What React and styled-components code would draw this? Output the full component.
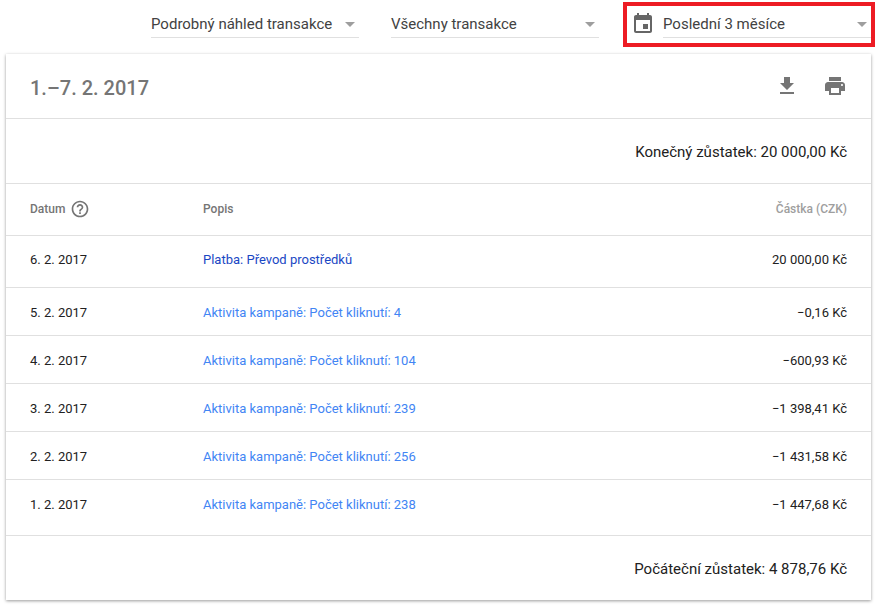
import React from 'react';
import styled, { createGlobalStyle } from 'styled-components';

const GlobalStyle = createGlobalStyle`
  html, body {
    margin: 0;
    padding: 0;
    background: #fff;
    font-family: Roboto, "Liberation Sans", sans-serif;
    overflow: hidden;
  }
`;

const Page = styled.div`
  width: 878px;
  height: 609px;
  padding: 2px 7px 0 6px;
  box-sizing: border-box;
`;

const Toolbar = styled.div`
  display: flex;
  justify-content: flex-end;
  align-items: flex-start;
  height: 52px;
  margin-right: -4px;
`;

const FilterGroup = styled.div`
  display: flex;
  align-items: flex-start;
  gap: 32px;
  margin-right: 24px;
  padding-top: 5px;
`;

const Select = styled.div`
  width: 208px;
  height: 31px;
  box-sizing: border-box;
  border-bottom: 1px solid #e0e0e0;
  display: flex;
  align-items: center;
  justify-content: space-between;
  padding: 4px 4px 0 0;
  font-size: 15px;
  color: #424242;
`;

const Caret = styled.span`
  width: 0;
  height: 0;
  border-left: 5px solid transparent;
  border-right: 5px solid transparent;
  border-top: 5px solid #9e9e9e;
`;

const Highlight = styled.div`
  width: 252px;
  height: 45px;
  box-sizing: border-box;
  border: 4px solid #ed1c24;
  display: flex;
  align-items: flex-start;
  padding: 1px 0 0 4px;
`;

const CalendarIcon = styled.svg`
  width: 24px;
  height: 24px;
  fill: #666666;
  margin: 5px 8px 0 0;
  flex-shrink: 0;
`;

const Card = styled.div`
  width: 865px;
  height: 546px;
  background: #fff;
  box-shadow: 0 1px 3px rgba(0, 0, 0, 0.4);
  display: flex;
  flex-direction: column;
`;

const CardHeader = styled.div`
  height: 65px;
  box-sizing: border-box;
  border-bottom: 1px solid #e0e0e0;
  padding: 0 24px;
  display: flex;
  align-items: center;
  justify-content: space-between;
`;

const Title = styled.h2`
  margin: 4px 0 0;
  font-size: 20px;
  font-weight: 500;
  color: #757575;
`;

const Actions = styled.div`
  display: flex;
  align-items: center;
  gap: 24px;
`;

const ActionIcon = styled.svg`
  width: 24px;
  height: 24px;
  fill: #757575;
`;

const Balance = styled.div`
  height: ${(p) => p.$height}px;
  box-sizing: border-box;
  border-bottom: ${(p) => (p.$last ? 'none' : '1px solid #e0e0e0')};
  padding: ${(p) => p.$top}px 24px 0;
  display: flex;
  align-items: center;
  justify-content: flex-end;
  font-size: 15px;
  color: #212121;
`;

const Row = styled.div`
  height: ${(p) => p.$height}px;
  box-sizing: border-box;
  border-bottom: 1px solid #e0e0e0;
  padding: ${(p) => p.$top || 0}px 24px ${(p) => p.$bottom || 0}px;
  display: grid;
  grid-template-columns: 173px 1fr auto;
  align-items: center;
  font-size: 13px;
  color: #212121;
`;

const HeadCell = styled.div`
  font-size: 12px;
  font-weight: 500;
  color: ${(p) => p.$color || '#757575'};
  display: flex;
  align-items: center;
  gap: 5px;
`;

const HelpIcon = styled.svg`
  width: 20px;
  height: 20px;
  fill: #757575;
`;

const LinkText = styled.a`
  color: ${(p) => (p.$dark ? '#1a47c4' : '#4285f4')};
`;

const rows = [
  { date: '6. 2. 2017', text: 'Platba: Převod prostředků', amount: '20 000,00 Kč', height: 52, bottom: 4, dark: true },
  { date: '5. 2. 2017', text: 'Aktivita kampaně: Počet kliknutí: 4', amount: '−0,16 Kč', height: 48, top: 2 },
  { date: '4. 2. 2017', text: 'Aktivita kampaně: Počet kliknutí: 104', amount: '−600,93 Kč', height: 48, top: 2 },
  { date: '3. 2. 2017', text: 'Aktivita kampaně: Počet kliknutí: 239', amount: '−1 398,41 Kč', height: 48, top: 2 },
  { date: '2. 2. 2017', text: 'Aktivita kampaně: Počet kliknutí: 256', amount: '−1 431,58 Kč', height: 48, top: 2 },
  { date: '1. 2. 2017', text: 'Aktivita kampaně: Počet kliknutí: 238', amount: '−1 447,68 Kč', height: 56, bottom: 7 },
];

const App = () => {
  return (
    <Page>
      <GlobalStyle />
      <Toolbar>
        <FilterGroup>
          <Select>
            Podrobný náhled transakce
            <Caret />
          </Select>
          <Select>
            Všechny transakce
            <Caret />
          </Select>
        </FilterGroup>
        <Highlight>
          <CalendarIcon viewBox="0 0 24 24">
            <path d="M17 12h-5v5h5v-5zM16 1v2H8V1H6v2H5c-1.11 0-1.99.9-1.99 2L3 19c0 1.1.89 2 2 2h14c1.1 0 2-.9 2-2V5c0-1.1-.9-2-2-2h-1V1h-2zm3 18H5V8h14v11z" />
          </CalendarIcon>
          <Select>
            Poslední 3 měsíce
            <Caret />
          </Select>
        </Highlight>
      </Toolbar>
      <Card>
        <CardHeader>
          <Title>1.–7. 2. 2017</Title>
          <Actions>
            <ActionIcon viewBox="0 0 24 24">
              <path d="M19 9h-4V3H9v6H5l7 7 7-7zM5 18v2h14v-2H5z" />
            </ActionIcon>
            <ActionIcon viewBox="0 0 24 24">
              <path d="M19 8H5c-1.66 0-3 1.34-3 3v6h4v4h12v-4h4v-6c0-1.66-1.34-3-3-3zm-3 11H8v-5h8v5zm3-7c-.55 0-1-.45-1-1s.45-1 1-1 1 .45 1 1-.45 1-1 1zm-1-9H6v4h12V3z" />
            </ActionIcon>
          </Actions>
        </CardHeader>
        <Balance $height={65} $top={2}>Konečný zůstatek: 20 000,00 Kč</Balance>
        <Row $height={52} $bottom={2}>
          <HeadCell>
            Datum
            <HelpIcon viewBox="0 0 24 24">
              <path d="M11 18h2v-2h-2v2zm1-16C6.48 2 2 6.48 2 12s4.48 10 10 10 10-4.48 10-10S17.52 2 12 2zm0 18c-4.41 0-8-3.59-8-8s3.59-8 8-8 8 3.59 8 8-3.59 8-8 8zm0-14c-2.21 0-4 1.79-4 4h2c0-1.1.9-2 2-2s2 .9 2 2c0 2-3 1.75-3 5h2c0-2.25 3-2.5 3-5 0-2.21-1.79-4-4-4z" />
            </HelpIcon>
          </HeadCell>
          <HeadCell>Popis</HeadCell>
          <HeadCell $color="#9e9e9e">Částka (CZK)</HeadCell>
        </Row>
        {rows.map((row) => (
          <Row key={row.date} $height={row.height} $top={row.top} $bottom={row.bottom}>
            <div>{row.date}</div>
            <LinkText $dark={row.dark}>{row.text}</LinkText>
            <div>{row.amount}</div>
          </Row>
        ))}
        <Balance $height={64} $top={2} $last>Počáteční zůstatek: 4 878,76 Kč</Balance>
      </Card>
    </Page>
  );
};

export default App;
